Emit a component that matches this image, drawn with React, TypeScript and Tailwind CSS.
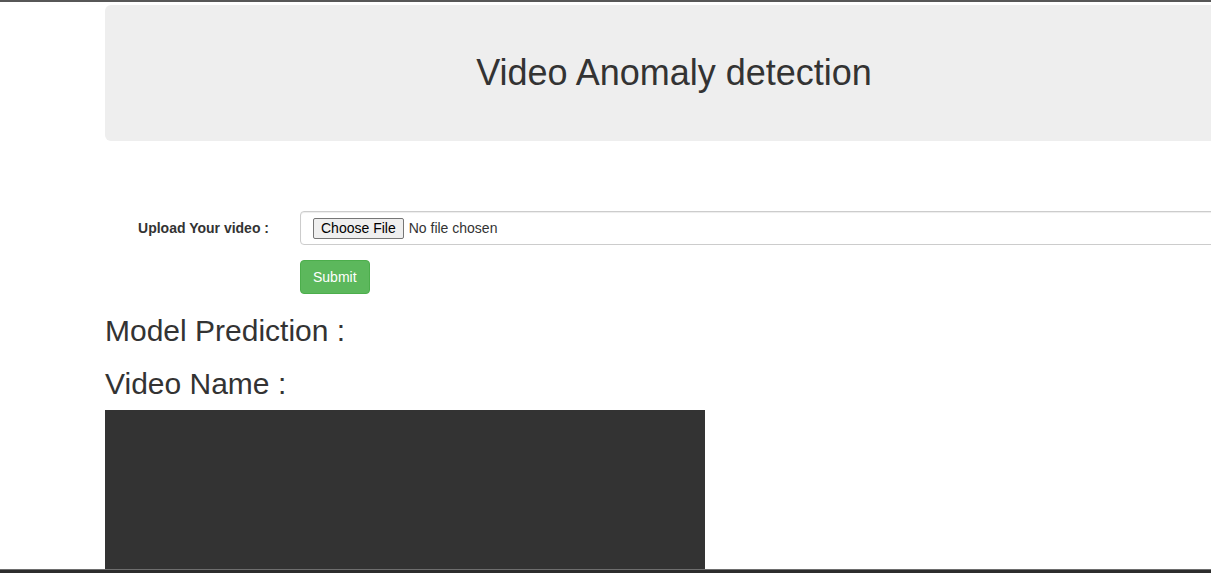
import React from 'react'

const App = () => {
    return (
        <div className="h-[573px] flex flex-col overflow-hidden bg-white text-[#333] font-['Liberation_Sans',Arial,sans-serif]">
            <div className="h-[2px] shrink-0 bg-[#575757]"></div>

            <div className="flex-1 overflow-hidden">
                {/* header */}
                <div className="mt-[3px] ml-[105px] w-[1138px] h-[136px] bg-[#eee] rounded-[6px] flex items-center justify-center">
                    <h1 className="text-[36px] leading-[1.1]">Video Anomaly detection</h1>
                </div>

                {/* upload form */}
                <form className="mt-[70px] ml-[105px]" onSubmit={(e) => e.preventDefault()}>
                    <div className="flex items-center">
                        <label className="w-[195px] shrink-0 pr-[31px] text-right text-[14px] font-bold">Upload Your video :</label>
                        <div className="w-[1000px] shrink-0 h-[34px] border border-[#ccc] rounded-[4px] px-[12px] flex items-center gap-[5px] text-[14px] shadow-[inset_0_1px_1px_rgba(0,0,0,0.075)]">
                            <span className="h-[21px] px-[7px] flex items-center bg-[#efefef] border border-[#767676] rounded-[2px] text-black">Choose File</span>
                            <span className="text-[#333]">No file chosen</span>
                        </div>
                    </div>
                    <div className="pl-[195px] mt-[15px]">
                        <button type="submit" className="h-[34px] px-[12px] bg-[#5cb85c] border border-[#4cae4c] rounded-[4px] text-white text-[14px]">
                            Submit
                        </button>
                    </div>
                </form>

                {/* results */}
                <div className="ml-[105px]">
                    <h2 className="mt-[20px] text-[30px] leading-[33px]">Model Prediction :</h2>
                    <h2 className="mt-[20px] text-[30px] leading-[33px]">Video Name :</h2>
                    <div className="mt-[10px] w-[600px] h-[338px] bg-[#333]"></div>
                </div>
            </div>

            <div className="h-[1px] shrink-0 bg-[#6e6e6e]"></div>
            <div className="h-[3px] shrink-0 bg-[#2d2d2d]"></div>
        </div>
    )
}

export default App
